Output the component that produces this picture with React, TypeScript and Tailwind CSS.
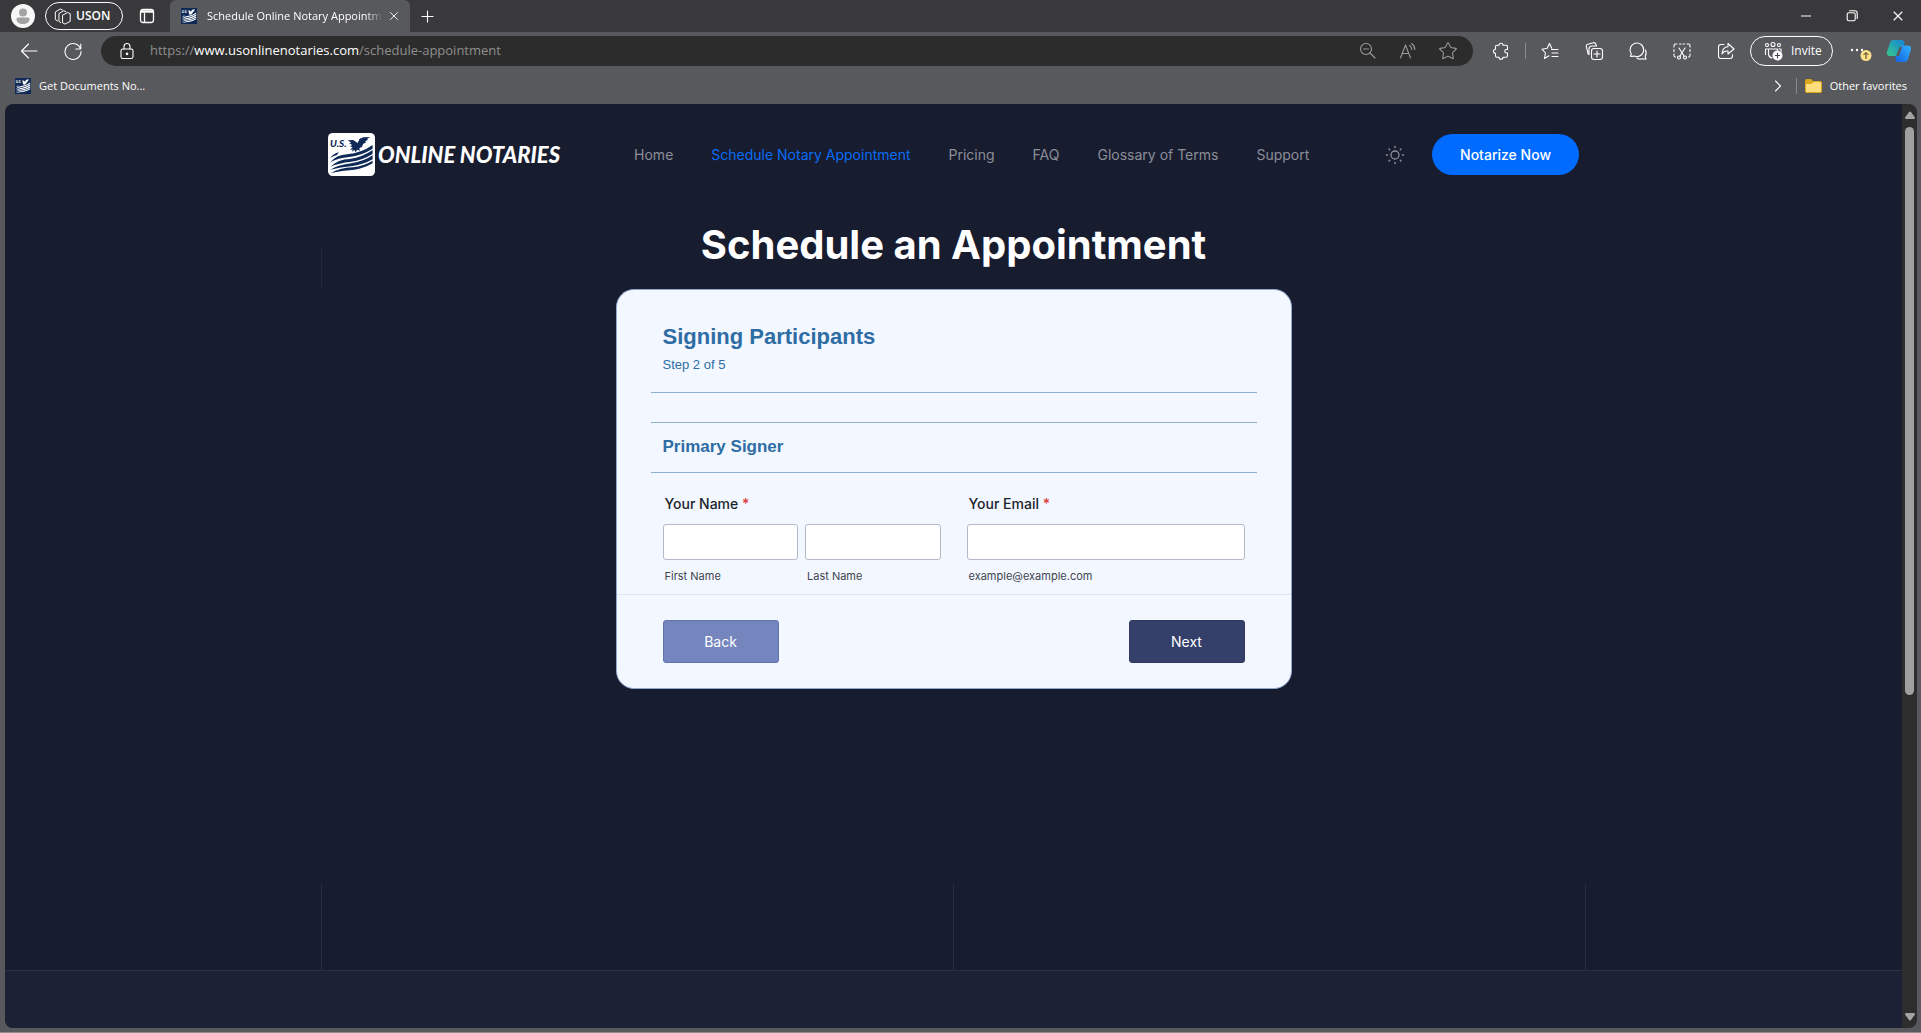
import type { ReactNode } from 'react'
import { ChevronRight, Minus, Plus, Star, X } from 'lucide-react'

const navLinks = [
  { label: 'Home' },
  { label: 'Schedule Notary Appointment', active: true },
  { label: 'Pricing' },
  { label: 'FAQ' },
  { label: 'Glossary of Terms' },
  { label: 'Support' },
]

function Icon({ children, className = 'size-5' }: { children: ReactNode; className?: string }) {
  return (
    <svg
      viewBox="0 0 20 20"
      className={className}
      fill="none"
      stroke="currentColor"
      strokeWidth="1.1"
      strokeLinecap="round"
      strokeLinejoin="round"
      aria-hidden="true"
    >
      {children}
    </svg>
  )
}

function LogoMark({ box, ink, radius, className }: { box: string; ink: string; radius: number; className: string }) {
  return (
    <svg viewBox="0 0 138 129" preserveAspectRatio="none" className={className} aria-hidden="true">
      <rect width="138" height="129" rx={radius} fill={box} />
      <text x="6" y="41" fontFamily="Lato" fontSize="29" fontWeight="900" fontStyle="italic" fill={ink}>
        U.S.
      </text>
      <path
        fill={ink}
        d="M58 22 L74 21 L87 30 L93 17 L104 13 L124 12 L114 18 L118 20 L109 25 L112 28 L103 33 L100 41 L92 46 L94 53 L86 50 L81 58 L78 51 L70 56 L73 49 L64 51 L72 43 L65 40 L71 36 L62 31 L68 29 Z"
      />
      <g fill={ink}>
        <path d="M7 75 Q16 61 32 58 L26 66 Q15 69 7 75 Z" />
        <path d="M7 88 Q24 66 56 64 Q98 60 131 36 L131 47 Q98 68 62 72 Q30 75 7 88 Z" />
        <path d="M7 101 Q30 79 64 78 Q102 72 131 51 L131 63 Q100 82 68 86 Q32 90 7 101 Z" />
        <path d="M7 110 Q32 95 68 91 Q104 86 131 67 L131 79 Q104 95 72 99 Q36 102 7 110 Z" />
        <path d="M8 120 Q34 105 72 103 Q106 99 131 83 L131 91 Q106 106 78 110 Q40 112 8 120 Z" />
      </g>
    </svg>
  )
}

function Favicon() {
  return <LogoMark box="#0f2a57" ink="#ffffff" radius={0} className="size-4 shrink-0" />
}

function TitleBar() {
  return (
    <div className="flex h-8 items-center bg-[#39393c]">
      <button aria-label="Profile" className="ml-[11px] shrink-0">
        <svg viewBox="0 0 24 24" className="size-6" aria-hidden="true">
          <circle cx="12" cy="12" r="12" fill="#f7f7f7" />
          <circle cx="12" cy="8.5" r="4" fill="#a5a3a1" />
          <path d="M7 13.5h10a1.500 1.500 0 0 1 1.500 1.500c0 3.300-2.800 5-6.500 5s-6.500-1.700-6.500-5A1.500 1.500 0 0 1 7 13.500Z" fill="#a5a3a1" />
        </svg>
      </button>
      <button className="ml-[10px] flex h-7 w-[78px] shrink-0 items-center gap-1 rounded-full border border-white pl-[8px] text-xs font-semibold">
        <Icon className="size-[18px]">
          <path d="M4 15.500 1.500 14V5.500L7 2.200l2.300 1M7.500 17.300 5.500 16V7.200l5.400-3.100 2.300 1.100M9.500 9.500v8.100l2.800 1.400 5.700-3V7.400L15.600 6.300Z" />
        </Icon>
        USON
      </button>
      <button aria-label="Tab actions" className="ml-[15px] shrink-0">
        <svg viewBox="0 0 18 18" className="size-[18px]" fill="none" stroke="#fff" strokeWidth="1.300" aria-hidden="true">
          <rect x="2.500" y="2.500" width="13" height="13" rx="2.500" />
          <path d="M3 4.500h12" strokeWidth="2.500" />
          <path d="M6.500 6v9" />
        </svg>
      </button>
      <div className="ml-[14px] flex h-8 w-[240px] shrink-0 items-center rounded-t-md bg-[#58595c] pl-[11px]">
        <Favicon />
        <span className="ml-[10px] w-[176px] mask-r-from-90% text-[11px] whitespace-nowrap">
          Schedule Online Notary Appointm
        </span>
        <button aria-label="Close tab" className="ml-1">
          <X className="size-[14px]" strokeWidth={1.500} />
        </button>
      </div>
      <button aria-label="New tab" className="ml-2">
        <Plus className="size-[19px]" strokeWidth={1.400} />
      </button>
      <div className="ml-auto flex items-center gap-[30px] pr-[15px]">
        <button aria-label="Minimize">
          <Minus className="size-4" strokeWidth={1.500} />
        </button>
        <button aria-label="Restore">
          <Icon className="size-4">
            <rect x="4" y="6" width="10" height="10" rx="2" strokeWidth="1.400" />
            <path d="M7 3.500h6.500a3 3 0 0 1 3 3V13" strokeWidth="1.400" />
          </Icon>
        </button>
        <button aria-label="Close">
          <X className="size-4" strokeWidth={1.600} />
        </button>
      </div>
    </div>
  )
}

function ToolBar() {
  return (
    <div className="flex h-[38px] items-center">
      <button aria-label="Back" className="ml-[19px] shrink-0">
        <Icon>
          <path d="M18 10H2.500M9.500 3 2.500 10l7 7" />
        </Icon>
      </button>
      <button aria-label="Refresh" className="ml-6 shrink-0">
        <Icon>
          <path d="M17.600 8A8 8 0 1 0 18 10.500M17.800 3v5h-5" />
        </Icon>
      </button>
      <div className="ml-[18px] flex h-[30px] min-w-0 flex-1 items-center rounded-full bg-[#2c2c2c] pr-[15px] pl-[16px]">
        <Icon>
          <rect x="4" y="8" width="12" height="9.500" rx="1.800" />
          <path d="M7 8V5.500a3 3 0 0 1 6 0V8" />
          <circle cx="10" cy="12.800" r=".8" fill="currentColor" />
        </Icon>
        <a href="#" className="ml-[13px] flex-1 text-[13px] text-[#8f8f8f]">
          https://<span className="text-white">www.usonlinenotaries.com</span>/schedule-appointment
        </a>
        <div className="flex items-center gap-5 text-[#9a9a9a]">
          <button aria-label="Zoom out">
            <Icon>
              <circle cx="8" cy="8" r="5.500" />
              <path d="m12 12 5 5M5.500 8h5" />
            </Icon>
          </button>
          <button aria-label="Read aloud">
            <Icon>
              <path d="M2.500 17 7.500 4l5 13M4.200 12.500h6.600M11.500 4.500a5 5 0 0 1 2.300 4M13.500 2.500a7.500 7.500 0 0 1 3.300 6" />
            </Icon>
          </button>
          <button aria-label="Add to favorites">
            <Star className="size-5" strokeWidth={1.300} />
          </button>
        </div>
      </div>
      <div className="flex shrink-0 items-center">
        <button aria-label="Extensions" className="ml-[18px]">
          <Icon>
            <path d="M8 4.200a2 2 0 0 1 4 0h3A1.500 1.500 0 0 1 16.500 5.700V8.500h-1a1.700 1.700 0 0 0 0 3.500h1v2.800a1.500 1.500 0 0 1-1.500 1.500h-3a2 2 0 0 1-4 0H6a1.500 1.500 0 0 1-1.500-1.500V12.300a2 2 0 0 1 0-4V5.700A1.500 1.500 0 0 1 6 4.200Z" />
          </Icon>
        </button>
        <span className="ml-[14px] h-4 w-px bg-[#8a8a8c]" />
        <div className="ml-[14px] flex gap-6">
          <button aria-label="Favorites">
            <Icon>
              <path d="M9 14.800 4.500 17.500 5.500 12 2 8.200l5.200-.9L9.500 2.500l2.300 4.700M11.500 8.500h6.500M12 12h6M12 15.500h6" />
            </Icon>
          </button>
          <button aria-label="Collections">
            <Icon>
              <rect x="7.500" y="7.500" width="11" height="11" rx="2.500" />
              <path d="M13 10v6M10 13h6M5 13.500l-.8-.4L2.300 5.500a2 2 0 0 1 1.500-2.300L9.500 1.700a2 2 0 0 1 2.400 1.500L12.500 5H8a3 3 0 0 0-3 3Z" />
            </Icon>
          </button>
          <button aria-label="Chat">
            <Icon>
              <path d="M2.500 15.500 3.300 12.700a6.800 6.800 0 1 1 3 2.400ZM9 17.200a6.500 6.500 0 0 0 5.500.5l3.500.6-.8-3a6.500 6.500 0 0 0 .2-6.300" />
            </Icon>
          </button>
          <button aria-label="Screenshot">
            <Icon>
              <path d="M2 6V4.500A1.500 1.500 0 0 1 3.500 3H5M7.500 3h1.500M11 3h1.500M15 3h1.500A1.500 1.500 0 0 1 18 4.500V6M2 8.500v2M18 8.500v2M2 13v1.500A1.500 1.500 0 0 0 3.500 16M18 13v1.500a1.500 1.500 0 0 1-1.500 1.500M7 7l5 8M13 7l-5 8" />
              <circle cx="7" cy="16.500" r="1.500" />
              <circle cx="13" cy="16.500" r="1.500" />
            </Icon>
          </button>
          <button aria-label="Share">
            <Icon>
              <path d="M8 3.500H5A2.500 2.500 0 0 0 2.500 6v9A2.500 2.500 0 0 0 5 17.500h9a2.500 2.500 0 0 0 2.500-2.500v-1.500M12 2.500 18 8l-6 5v-3q-4-.5-6 3 .500-7 6-7.300Z" />
            </Icon>
          </button>
        </div>
        <button className="ml-[14px] flex h-[30px] w-[83px] items-center gap-2 rounded-full border border-white pl-[12px] text-xs">
          <Icon>
            <circle cx="4" cy="4" r="1.500" />
            <circle cx="10" cy="3.500" r="2" />
            <circle cx="16" cy="4" r="1.500" />
            <path d="M2.500 13.500V8h2M5.500 8h9v3M5.500 8v5.500q.8 3 3.500 3.500M16 8h2v2.500" />
            <circle cx="14.500" cy="14.500" r="4.500" fill="#fff" />
            <path d="M14.500 12.300v4.400M12.300 14.500h4.400" stroke="#444" />
          </Icon>
          Invite
        </button>
        <button aria-label="Settings and more" className="ml-[17px]">
          <svg viewBox="0 0 22 20" className="h-5 w-[22px]" aria-hidden="true">
            <circle cx="2" cy="9" r="1.200" fill="#fff" />
            <circle cx="7" cy="9" r="1.200" fill="#fff" />
            <circle cx="12" cy="9" r="1.200" fill="#fff" />
            <circle cx="16" cy="14.500" r="5.500" fill="#ffe08a" />
            <path d="M16 17.800v-6M13.500 14 16 11.500l2.500 2.500" fill="none" stroke="#3a3520" />
          </svg>
        </button>
        <button aria-label="Copilot" className="mr-[9px] ml-[14px]">
          <svg viewBox="0 0 26 24" className="h-6 w-[26px]" aria-hidden="true">
            <defs>
              <linearGradient id="copilotLeft" x1="0" y1="1" x2="1" y2="0">
                <stop offset="0" stopColor="#35c98c" />
                <stop offset="1" stopColor="#1583d8" />
              </linearGradient>
              <linearGradient id="copilotRight" x1="0" y1="1" x2="1" y2="0">
                <stop offset="0" stopColor="#1460e0" />
                <stop offset="1" stopColor="#2fb4ff" />
              </linearGradient>
            </defs>
            <path d="M7 1h8.500a3 3 0 0 1 2.800 4L17 8h-3.500L10 17H4a3 3 0 0 1-3-4L4.200 3Q5 1 7 1Z" fill="url(#copilotLeft)" />
            <path d="M16.500 6.500H22a3 3 0 0 1 2.900 4L21.800 21q-.6 2-2.800 2H12q-2.800-.5-2.500-4l.5-2h3Z" fill="url(#copilotRight)" />
          </svg>
        </button>
      </div>
    </div>
  )
}

function BookmarkBar() {
  return (
    <div className="flex h-[34px] items-center pr-[14px] pb-0.5 pl-[15px] text-[11px]">
      <a href="#" className="flex items-center gap-2">
        <Favicon />
        Get Documents No...
      </a>
      <button aria-label="More favorites" className="ml-auto">
        <ChevronRight className="size-5" strokeWidth={1.300} />
      </button>
      <span className="mx-2 h-4 w-px bg-[#8a8a8c]" />
      <a href="#" className="flex items-center gap-2">
        <svg viewBox="0 0 17 16" className="h-4 w-[17px]" aria-hidden="true">
          <path d="M0 3a2 2 0 0 1 2-2h4l2 2h7a2 2 0 0 1 2 2v8a2 2 0 0 1-2 2H2a2 2 0 0 1-2-2Z" fill="#d9a81c" />
          <path d="M1 6h5.500l2-2H15a1 1 0 0 1 1 1v9H1Z" fill="#ffdc7c" />
        </svg>
        Other favorites
      </a>
    </div>
  )
}

function SiteHeader() {
  return (
    <header className="mx-auto flex w-full max-w-[1265px] items-center px-[7px] pt-[29px]">
      <a href="#" className="flex items-center gap-[3px]" aria-label="U.S. Online Notaries">
        <LogoMark box="#ffffff" ink="#0f2a57" radius={14} className="h-[43px] w-[47px]" />
        <span className="font-[Lato] text-[22px] leading-7 font-black whitespace-nowrap text-white italic">ONLINE NOTARIES</span>
      </a>
      <nav className="ml-[74px] flex gap-[38px] text-sm whitespace-nowrap text-[#8c8e99]">
        {navLinks.map((link) => (
          <a key={link.label} href="#" className={link.active ? 'text-[#0a6cf5]' : ''}>
            {link.label}
          </a>
        ))}
      </nav>
      <button aria-label="Toggle theme" className="ml-auto text-[#8c8e99]">
        <Icon>
          <circle cx="10" cy="10" r="4" strokeWidth="1.300" />
          <path
            strokeWidth="1.500"
            d="M10 1.500v1M10 17.500v1M1.500 10h1M17.500 10h1M4 4l.7.7M15.300 15.300l.7.7M4 16l.7-.7M15.300 4.700 16 4"
          />
        </Icon>
      </button>
      <a href="#" className="ml-[27px] rounded-full bg-[#006bff] px-7 py-[10px] text-sm leading-[21px] font-medium text-white">
        Notarize Now
      </a>
    </header>
  )
}

function AppointmentForm() {
  const input = 'h-9 w-full rounded-[3px] border border-[#b3b9c9] bg-white px-2 text-sm'
  const hint = 'mt-[9px] px-[2px] text-[11px] leading-[14px] text-[#40454f]'

  return (
    <form className="mx-auto w-full max-w-[676px] rounded-[18px] border border-[#8fa9cf] bg-[#f3f7ff] text-[#20242c]">
      <div className="px-[34px] pt-8">
        <div className="border-b border-[#8fb0cc] px-3 pb-[18px] font-['Liberation_Sans'] text-[#2e6da4]">
          <h2 className="text-[22px] leading-[30px] font-bold">Signing Participants</h2>
          <p className="mt-1 text-[13px] leading-[18px]">Step 2 of 5</p>
        </div>
        <div className="mt-[29px] border-y border-[#8fb0cc] px-3 pt-3 pb-[13px] font-['Liberation_Sans'] text-[#2e6da4]">
          <h3 className="text-[17px] leading-6 font-bold">Primary Signer</h3>
        </div>
        <div className="grid grid-cols-2 gap-[26px] px-3 pt-[21px] pb-[11px]">
          <fieldset>
            <legend className="px-[2px] text-sm leading-5 font-medium">
              Your Name <span className="text-[#e03a3a]">*</span>
            </legend>
            <div className="mt-[10px] grid grid-cols-2 gap-[7px]">
              <div>
                <input id="first" className={input} />
                <label htmlFor="first" className={`block ${hint}`}>
                  First Name
                </label>
              </div>
              <div>
                <input id="last" className={input} />
                <label htmlFor="last" className={`block ${hint}`}>
                  Last Name
                </label>
              </div>
            </div>
          </fieldset>
          <div>
            <label htmlFor="email" className="block px-[2px] text-sm leading-5 font-medium">
              Your Email <span className="text-[#e03a3a]">*</span>
            </label>
            <input id="email" type="email" className={`mt-[10px] ${input}`} />
            <p className={hint}>example@example.com</p>
          </div>
        </div>
      </div>
      <div className="flex justify-between border-t border-[#dfe4ef] px-[46px] py-[25px] text-sm text-white">
        <button type="button" className="h-[43px] w-[116px] rounded-[3px] border border-[#5f74b0] bg-[#7586bf]">
          Back
        </button>
        <button type="submit" className="h-[43px] w-[116px] rounded-[3px] border border-[#303a60] bg-[#344069]">
          Next
        </button>
      </div>
    </form>
  )
}

function ScrollBar() {
  return (
    <div className="flex w-[15px] shrink-0 flex-col items-center bg-[#2c2d2c] text-[#a3a3a3]">
      <svg viewBox="0 0 10 8" className="mt-[7px] h-2 w-[10px]" fill="currentColor" aria-hidden="true">
        <path d="M4 1q1-1 2 0l4 5.500q0 1.500-1 1.500H1Q0 8 0 6.500Z" />
      </svg>
      <div className="mt-[8px] w-[9px] flex-25 rounded-full bg-[#a0a0a0]" />
      <div className="flex-14" />
      <svg viewBox="0 0 10 8" className="mb-[7px] h-2 w-[10px]" fill="currentColor" aria-hidden="true">
        <path d="M4 7q1 1 2 0l4-5.500Q10 0 9 0H1Q0 0 0 1.500Z" />
      </svg>
    </div>
  )
}

export default function App() {
  return (
    <div className="flex min-h-screen flex-col border-b border-[#8b8d8c] bg-[#58595c] font-['Open_Sans',sans-serif] text-white">
      <TitleBar />
      <ToolBar />
      <BookmarkBar />
      <div className="mr-1 mb-1 ml-[5px] flex flex-1 overflow-hidden rounded-lg">
        <div className="flex min-w-0 flex-1 flex-col bg-[#181c2f] font-[Inter,sans-serif]">
          <SiteHeader />
          <main className="flex flex-1 flex-col">
            <div className="mx-auto grid w-full max-w-[1265px] grid-cols-[1px_1fr_1px] pt-[43px]">
              <span className="h-10 self-end bg-[#272a3c]" />
              <h1 className="pb-[18px] text-center text-[40px] leading-[52px] font-bold">Schedule an Appointment</h1>
            </div>
            <AppointmentForm />
            <div className="mx-auto mt-auto flex h-[86px] w-full max-w-[1265px] justify-between">
              <span className="w-px bg-[#2a2c40]" />
              <span className="w-px bg-[#2a2c40]" />
              <span className="w-px bg-[#2a2c40]" />
            </div>
          </main>
          <footer className="h-[58px] border-t border-[#2d3044] bg-[#1c2135]" />
        </div>
        <ScrollBar />
      </div>
    </div>
  )
}
